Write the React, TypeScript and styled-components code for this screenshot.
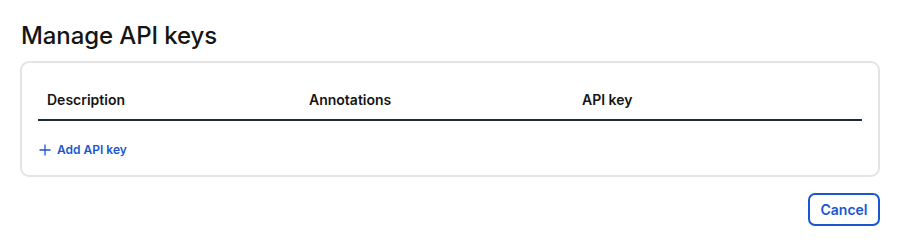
import React from "react";
import styled, { createGlobalStyle } from "styled-components";

const Global = createGlobalStyle`
  html, body { margin: 0; padding: 0; background: #ffffff; }
  body { font-family: Inter, "Noto Sans", sans-serif; color: #151515; }
  * { box-sizing: border-box; }
`;

const Page = styled.div`
  padding: 20px 20px 0 20px;
  display: flex;
  flex-direction: column;
  width: 900px;
`;

const Title = styled.h1`
  margin: 0;
  padding-left: 1px;
  font-size: 24px;
  font-weight: 500;
  line-height: 32px;
  letter-spacing: -0.1px;
  color: #151515;
  height: 41px;
`;

const Card = styled.section`
  border: 2px solid #e4e4e6;
  border-radius: 9px;
  padding: 15px 16px 11px 16px;
  width: 860px;
  height: 116px;
`;

const HeaderRow = styled.div`
  display: grid;
  grid-template-columns: 262px 273px 1fr;
  height: 43px;
  align-items: center;
  border-bottom: 2px solid #1b2d3d;
  padding-top: 2px;
`;

const HeaderCell = styled.div`
  padding-left: 9px;
  font-size: 14px;
  font-weight: 600;
  color: #151515;
`;

const AddButton = styled.button`
  display: flex;
  align-items: center;
  gap: 6px;
  margin-top: 21px;
  padding: 0 0 0 1px;
  border: none;
  background: none;
  font-family: inherit;
  font-size: 12px;
  font-weight: 600;
  color: #1a56d0;
  cursor: pointer;
`;

const Footer = styled.div`
  display: flex;
  justify-content: flex-end;
  width: 860px;
  margin-top: 16px;
`;

const CancelButton = styled.button`
  width: 72px;
  height: 33px;
  border: 2px solid #1a56d0;
  border-radius: 7px;
  background: #fff;
  color: #1a56d0;
  font-family: inherit;
  font-size: 14px;
  font-weight: 600;
  cursor: pointer;
`;

const Plus = () => (
  <svg width="12" height="12" viewBox="0 0 12 12" aria-hidden="true">
    <path d="M6 0.5v11M0.5 6h11" stroke="currentColor" strokeWidth="1.3" fill="none" />
  </svg>
);

export default function App() {
  return (
    <>
      <Global />
      <Page>
        <Title>Manage API keys</Title>
        <Card>
          <HeaderRow>
            <HeaderCell>Description</HeaderCell>
            <HeaderCell>Annotations</HeaderCell>
            <HeaderCell>API key</HeaderCell>
          </HeaderRow>
          <AddButton>
            <Plus />
            Add API key
          </AddButton>
        </Card>
        <Footer>
          <CancelButton>Cancel</CancelButton>
        </Footer>
      </Page>
    </>
  );
}
